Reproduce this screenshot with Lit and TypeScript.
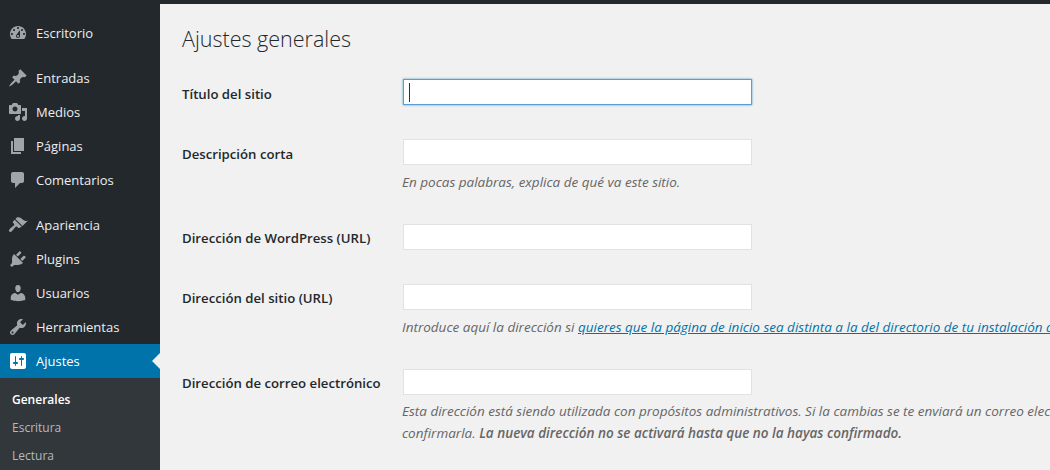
import { LitElement, html, css, svg } from 'lit';
import { customElement } from 'lit/decorators.js';

const ICONS: Record<string, string> = {
  dashboard: 'M3.76 16h12.48c1.1-1.37 1.76-3.11 1.76-5 0-4.42-3.58-8-8-8s-8 3.58-8 8c0 1.89.66 3.63 1.76 5zM10 4c.55 0 1 .45 1 1s-.45 1-1 1-1-.45-1-1 .45-1 1-1zM6 6c.55 0 1 .45 1 1s-.45 1-1 1-1-.45-1-1 .45-1 1-1zm8 0c.55 0 1 .45 1 1s-.45 1-1 1-1-.45-1-1 .45-1 1-1zm-5.37 5.55L12 7v6c0 1.1-.9 2-2 2s-2-.9-2-2c0-.57.24-1.08.63-1.45zM4 10c.55 0 1 .45 1 1s-.45 1-1 1-1-.45-1-1 .45-1 1-1zm12 0c.55 0 1 .45 1 1s-.45 1-1 1-1-.45-1-1 .45-1 1-1zm-5 3c0-.55-.45-1-1-1s-1 .45-1 1 .45 1 1 1 1-.45 1-1z',
  pin: 'M10.44 3.02l1.82-1.82 6.36 6.35-1.83 1.82c-1.05-.68-2.48-.57-3.41.36l-.75.75c-.92.93-1.04 2.35-.35 3.41l-1.83 1.82-2.41-2.41-2.8 2.79c-.42.42-3.38 2.71-3.8 2.29s1.86-3.39 2.28-3.81l2.79-2.79L4.1 9.36l1.83-1.82c1.05.69 2.48.57 3.4-.36l.75-.75c.93-.92 1.05-2.35.36-3.41z',
  media: 'M13 11V4c0-.55-.45-1-1-1h-1.67L9 1H5L3.67 3H2c-.55 0-1 .45-1 1v7c0 .55.45 1 1 1h10c.55 0 1-.45 1-1zM7 4.5c1.38 0 2.5 1.12 2.5 2.5S8.38 9.5 7 9.5 4.5 8.38 4.5 7 5.62 4.5 7 4.5zM14 6h5v10.5c0 1.38-1.12 2.5-2.5 2.5S14 17.88 14 16.5s1.12-2.5 2.5-2.5c.17 0 .34.02.5.05V9h-3V6zm-4 8.05V13h2v3.5c0 1.38-1.12 2.5-2.5 2.5S7 17.88 7 16.5 8.12 14 9.5 14c.17 0 .34.02.5.05z',
  page: 'M6 15V2h10v13H6zm-1 1h8v2H3V5h2v11z',
  comments: 'M5 2h9c1.1 0 2 .9 2 2v7c0 1.1-.9 2-2 2h-2l-5 5v-5H5c-1.1 0-2-.9-2-2V4c0-1.1.9-2 2-2z',
  appearance: 'M14.48 11.06L7.41 3.99l1.5-1.5c.5-.56 2.3-.47 3.51.32 1.21.8 1.43 1.28 2.91 2.1 1.18.64 2.45 1.26 4.45.85zM13.77 11.77L6.7 4.7 5 6.4c-.4.4-.4 1 0 1.4l1 1c.4.4.4 1 0 1.4-1.3 1.3-3.4 2.5-4.6 4.2-.7 1-.6 1.6 0 2.1.5.5 1.1.6 2.1-.1 1.7-1.2 2.9-3.3 4.2-4.6.4-.4 1-.4 1.4 0l1 1c.4.4 1 .4 1.4 0z',
  plugins: 'M13.11 4.36L9.87 7.6 8 5.73l3.24-3.24c.35-.34 1.05-.2 1.56.32.52.51.66 1.21.31 1.55zm-8 1.77l.91-1.12 9.01 9.01-1.19.84c-.71.71-2.63 1.16-3.82 1.16H6.14L4.9 17.26c-.59.59-1.54.59-2.12 0-.59-.58-.59-1.53 0-2.12l1.24-1.24v-3.88c0-1.13.4-3.19 1.09-3.89zm7.26 3.97l3.24-3.24c.34-.35 1.04-.21 1.55.31.52.51.66 1.21.31 1.55l-3.24 3.25z',
  users: 'M10 9.25c-2.27 0-2.73-3.44-2.73-3.44C7 4.02 7.82 2 9.97 2c2.16 0 2.98 2.02 2.71 3.81 0 0-.41 3.44-2.68 3.44zm0 2.57L12.72 10c2.39 0 4.52 2.33 4.52 4.53v2.49s-3.65 1.13-7.24 1.13c-3.65 0-7.24-1.13-7.24-1.13v-2.49c0-2.25 1.94-4.48 4.47-4.48z',
  tools: 'M16.68 9.77c-1.34 1.34-3.3 1.67-4.95.99l-5.41 6.52c-.99.99-2.59.99-3.58 0s-.99-2.59 0-3.57l6.52-5.42c-.68-1.65-.35-3.61.99-4.95 1.28-1.28 3.12-1.62 4.72-1.06l-2.89 2.89 2.82 2.82 2.86-2.87c.53 1.58.18 3.39-1.08 4.65zM3.81 16.21c.4.39 1.04.39 1.43 0 .4-.4.4-1.04 0-1.43-.39-.4-1.03-.4-1.43 0-.39.39-.39 1.03 0 1.43z',
  settings: 'M18 16V4c0-1.1-.9-2-2-2H4c-1.1 0-2 .9-2 2v12c0 1.1.9 2 2 2h12c1.1 0 2-.9 2-2zM8 11h1c.55 0 1 .45 1 1s-.45 1-1 1H8v1.5c0 .28-.22.5-.5.5s-.5-.22-.5-.5V13H6c-.55 0-1-.45-1-1s.45-1 1-1h1V5.5c0-.28.22-.5.5-.5s.5.22.5.5V11zm5-2h-1c-.55 0-1-.45-1-1s.45-1 1-1h1V5.5c0-.28.22-.5.5-.5s.5.22.5.5V7h1c.55 0 1 .45 1 1s-.45 1-1 1h-1v5.5c0 .28-.22.5-.5.5s-.5-.22-.5-.5V9z',
};

const MENU_GROUPS = [
  [{ icon: 'dashboard', label: 'Escritorio' }],
  [
    { icon: 'pin', label: 'Entradas' },
    { icon: 'media', label: 'Medios' },
    { icon: 'page', label: 'Páginas' },
    { icon: 'comments', label: 'Comentarios' },
  ],
  [
    { icon: 'appearance', label: 'Apariencia' },
    { icon: 'plugins', label: 'Plugins' },
    { icon: 'users', label: 'Usuarios' },
    { icon: 'tools', label: 'Herramientas' },
    { icon: 'settings', label: 'Ajustes', active: true },
  ],
];

@customElement('app-root')
export class AppRoot extends LitElement {
  static styles = css`
    :host {
      display: flex;
      width: 1050px;
      height: 470px;
      overflow: hidden;
      background: #f1f1f1;
      border-top: 4px solid #23282d;
      box-sizing: border-box;
      font-family: 'Open Sans', 'Noto Sans', sans-serif;
      color: #23282d;
    }
    .side {
      flex: 0 0 160px;
      background: #23282d;
      padding-top: 12px;
    }
    .group {
      margin-bottom: 11px;
    }
    .item {
      position: relative;
      display: flex;
      align-items: center;
      height: 34px;
      padding-left: 8px;
      gap: 8px;
      font-size: 13px;
      color: #eeeeee;
    }
    .item svg {
      width: 20px;
      height: 20px;
      fill: #a0a5aa;
      fill-rule: evenodd;
    }
    .item.active {
      background: #0073aa;
      color: #fff;
    }
    .item.active svg {
      fill: #fff;
    }
    .item.active::after {
      content: '';
      position: absolute;
      right: 0;
      top: 9px;
      border: 8px solid transparent;
      border-right-color: #f1f1f1;
      border-left-width: 0;
    }
    .sub {
      margin-top: -11px;
      background: #32373c;
      padding: 8px 0 0 12px;
      font-size: 12px;
      color: #b4b9be;
    }
    .sub div {
      height: 28px;
      line-height: 28px;
    }
    .sub .current {
      color: #fff;
      font-weight: 600;
    }
    .main {
      flex: 1;
      min-width: 0;
      padding: 0 0 0 22px;
      white-space: nowrap;
    }
    h1 {
      margin: 0;
      padding-top: 18px;
      height: 57px;
      box-sizing: border-box;
      font-size: 21.5px;
      line-height: 34px;
      font-weight: 300;
    }
    .row {
      display: grid;
      grid-template-columns: 221px 349px;
      padding: 18px 0 16px;
    }
    .row label {
      height: 26px;
      font-size: 13.2px;
      font-weight: 600;
      line-height: 30px;
    }
    .row label.up {
      line-height: 28px;
    }
    .field {
      position: relative;
      display: block;
      box-sizing: border-box;
      width: 349px;
      height: 26px;
      margin: 0;
      padding: 0;
      background: #fff;
      border: 1px solid #e2e2e2;
      outline: none;
    }
    .field.focus {
      border-color: #5b9dd9;
      box-shadow: 0 0 2px rgba(30, 140, 190, 0.8);
    }
    .wrap {
      position: relative;
      height: 26px;
    }
    .caret {
      position: absolute;
      left: 6px;
      top: 4px;
      width: 1px;
      height: 19px;
      background: #333;
    }
    .desc {
      margin: 0 0 0 -1px;
      font-size: 13.5px;
      font-style: italic;
      line-height: 22px;
      color: #666;
      width: 660px;
      overflow: hidden;
    }
    .row.has-desc {
      padding-bottom: 0;
    }
    .row.has-desc .desc {
      grid-column: 2;
      padding-top: 6px;
      margin-bottom: 13px;
    }
    .row.has-desc .desc.tight {
      padding-top: 5px;
    }
    .desc a {
      color: #0073aa;
    }
    .desc b {
      font-weight: 600;
    }
  `;

  private _icon(name: string) {
    return html`<svg viewBox="0 0 20 20">${svg`<path d=${ICONS[name]}></path>`}</svg>`;
  }

  private _side() {
    return html`
      <nav class="side">
        ${MENU_GROUPS.map(
          (group) => html`
            <div class="group">
              ${group.map(
                (it: { icon: string; label: string; active?: boolean }) => html`
                  <div class="item ${it.active ? 'active' : ''}">${this._icon(it.icon)}<span>${it.label}</span></div>
                `,
              )}
            </div>
          `,
        )}
        <div class="sub">
          <div class="current">Generales</div>
          <div>Escritura</div>
          <div>Lectura</div>
        </div>
      </nav>
    `;
  }

  render() {
    return html`
      ${this._side()}
      <main class="main">
        <h1>Ajustes generales</h1>
        <div class="row">
          <label>Título del sitio</label>
          <div class="wrap"><input class="field focus" /><span class="caret"></span></div>
        </div>
        <div class="row has-desc">
          <label>Descripción corta</label>
          <input class="field" />
          <p class="desc">En pocas palabras, explica de qué va este sitio.</p>
        </div>
        <div class="row">
          <label class="up">Dirección de WordPress (URL)</label>
          <input class="field" />
        </div>
        <div class="row has-desc">
          <label class="up">Dirección del sitio (URL)</label>
          <input class="field" />
          <p class="desc">
            Introduce aquí la dirección si
            <a href="#">quieres que la página de inicio sea distinta a la del directorio de tu instalación de WordPress</a>.
          </p>
        </div>
        <div class="row has-desc">
          <label class="up">Dirección de correo electrónico</label>
          <input class="field" />
          <p class="desc tight">
            Esta dirección está siendo utilizada con propósitos administrativos. Si la cambias se te enviará un correo electrónico a tu nueva dirección para<br />
            confirmarla. <b>La nueva dirección no se activará hasta que no la hayas confirmado.</b>
          </p>
        </div>
      </main>
    `;
  }
}
